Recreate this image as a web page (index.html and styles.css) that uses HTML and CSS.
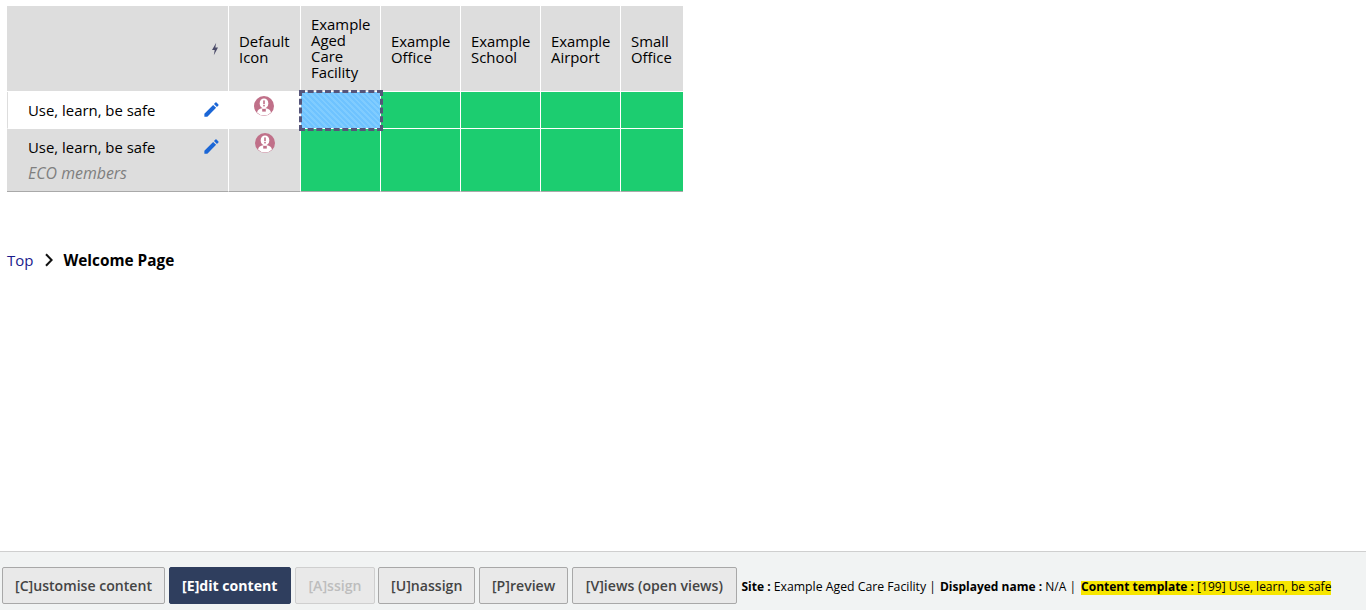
FILE: index.html
```html
<!DOCTYPE html>
<html lang="en">
<head>
<meta charset="utf-8">
<title>Welcome Page</title>
<link rel="stylesheet" href="styles.css">
</head>
<body>
<main class="content">
  <table class="matrix">
    <colgroup>
      <col class="c-name"><col class="c-icon"><col class="c-site"><col class="c-site2"><col class="c-site2"><col class="c-site2"><col class="c-last">
    </colgroup>
    <thead>
      <tr>
        <th class="bolt-cell"><svg class="bolt" viewBox="0 0 8 14" width="8" height="14"><path d="M5.2 .8 1 8h2.7L2.8 13.2 7 5.6H4.3z" fill="#4a4a68"/></svg></th>
        <th>Default<br>Icon</th>
        <th class="tall">Example<br>Aged<br>Care<br>Facility</th>
        <th>Example<br>Office</th>
        <th>Example<br>School</th>
        <th>Example<br>Airport</th>
        <th class="last">Small<br>Office</th>
      </tr>
    </thead>
    <tbody>
      <tr class="row-one">
        <td class="name active">
          <div class="name-line"><span>Use, learn, be safe</span>
            <svg class="pencil" viewBox="0 0 24 24" width="19" height="19"><path d="M3 17.25V21h3.75L17.81 9.94l-3.75-3.75L3 17.25zM20.71 7.04a1 1 0 0 0 0-1.41l-2.34-2.34a1 1 0 0 0-1.41 0l-1.83 1.83 3.75 3.75 1.83-1.83z" fill="#1b66d6"/></svg>
          </div>
        </td>
        <td class="icon-cell white">
          <svg class="person" viewBox="0 0 20 20" width="20" height="20"><use href="#person"/></svg>
        </td>
        <td class="selected"></td>
        <td class="green"></td><td class="green"></td><td class="green"></td><td class="green last"></td>
      </tr>
      <tr class="row-two">
        <td class="name">
          <div class="name-line"><span>Use, learn, be safe</span>
            <svg class="pencil" viewBox="0 0 24 24" width="19" height="19"><path d="M3 17.25V21h3.75L17.81 9.94l-3.75-3.75L3 17.25zM20.71 7.04a1 1 0 0 0 0-1.41l-2.34-2.34a1 1 0 0 0-1.41 0l-1.83 1.83 3.75 3.75 1.83-1.83z" fill="#1b66d6"/></svg>
          </div>
          <div class="group">ECO members</div>
        </td>
        <td class="icon-cell">
          <svg class="person" viewBox="0 0 20 20" width="20" height="20"><use href="#person"/></svg>
        </td>
        <td class="green"></td><td class="green"></td><td class="green"></td><td class="green"></td><td class="green last"></td>
      </tr>
    </tbody>
  </table>

  <nav class="crumbs">
    <a href="#">Top</a>
    <svg class="chev" viewBox="0 0 10 14" width="10" height="14"><path d="M2 1.2 7.6 7 2 12.8" fill="none" stroke="#111" stroke-width="2"/></svg>
    <strong>Welcome Page</strong>
  </nav>
</main>

<footer class="bar">
  <button class="btn">[C]ustomise content</button>
  <button class="btn primary">[E]dit content</button>
  <button class="btn disabled">[A]ssign</button>
  <button class="btn">[U]nassign</button>
  <button class="btn">[P]review</button>
  <button class="btn wide">[V]iews (open views)</button>
  <p class="status"><b>Site :</b> <span class="site-name">Example Aged Care Facility</span> <i class="sep">|</i> <b class="gap">Displayed name :</b> N/A <i class="sep">|</i> <mark><b>Content template :</b> [199] Use, learn, be safe</mark></p>
</footer>

<svg class="defs" width="0" height="0" aria-hidden="true">
  <symbol id="person" viewBox="0 0 20 20">
    <circle cx="10" cy="10" r="10" fill="#c07089"/>
    <path d="M3 16.4c.5-2.6 2.6-3.6 5-4.2h4c2.4.6 4.5 1.6 5 4.2A9.8 9.8 0 0 1 10 19.5a9.8 9.8 0 0 1-7-3.1z" fill="#fff"/>
    <ellipse cx="10" cy="7.4" rx="4.3" ry="5" fill="#fff"/>
    <rect x="9.2" y="4.4" width="1.6" height="3.8" fill="#c07089"/>
    <rect x="9.2" y="9" width="1.6" height="1.4" fill="#c07089"/>
    <rect x="8.2" y="13" width="3.6" height="2.6" fill="#c07089"/>
  </symbol>
</svg>
</body>
</html>
```
FILE: styles.css
```css
* { box-sizing: border-box; }
html, body { height: 100%; }
body {
  margin: 0;
  font-family: "Open Sans", "Noto Sans", sans-serif;
  color: #000;
  background: #fff;
  display: flex;
  flex-direction: column;
  overflow: hidden;
}
.content { flex: 1; padding: 6px 0 0 7px; min-height: 0; }
.matrix {
  table-layout: fixed;
  border-collapse: separate;
  border-spacing: 0;
  width: 676px;
  font-size: 14.9px;
}
.c-name { width: 222px; }
.c-icon { width: 72px; }
.c-site { width: 80px; }
.c-site2 { width: 80px; }
.c-last { width: 62px; }
.matrix th {
  height: 86px;
  background: #dddddd;
  border-right: 1px solid #fff;
  border-bottom: 1px solid #fff;
  font-weight: 400;
  line-height: 16px;
  text-align: left;
  vertical-align: middle;
  padding: 1px 0 0 10px;
}
.matrix th.tall { padding: 0 0 1px 10px; }
.matrix th.last, .matrix td.last { border-right: 0; }
.matrix th.bolt-cell { text-align: right; padding: 0 9px 0 0; }
.bolt { display: block; margin-left: auto; }
.matrix td {
  padding: 0;
  border-right: 1px solid #fff;
  border-bottom: 1px solid #fff;
  vertical-align: top;
}
.row-one td { height: 37px; }
.row-two td { height: 63px; border-bottom: 1px solid #a9a9a9; background: #dddddd; }
.matrix td.green { background: #1ccd70; }
.matrix td.name { padding: 0 0 0 21px; background: #dddddd; }
.row-one td.name.active { background: #fff; border-left: 1px solid #dddddd; padding-left: 20px; }
.name-line {
  display: flex;
  justify-content: space-between;
  align-items: center;
  height: 36px;
  padding-right: 7px;
}
.pencil { display: block; position: relative; top: -1px; }
.group { font-style: italic; font-size: 15.9px; color: #7f7f7f; line-height: 20px; margin-top: -2px; }
.matrix td.icon-cell { text-align: center; background: #dddddd; padding-top: 4px; }
.row-one .icon-cell.white { background: #fff; padding-right: 2px; }
.person { display: block; margin: 0 auto; }
.matrix td.selected {
  background: repeating-linear-gradient(45deg, #6fc3ff 0 2px, #80ccff 2px 4px);
  outline: 3px dashed #55557a;
  outline-offset: -1.5px;
}
.crumbs {
  display: flex;
  align-items: center;
  margin-top: 58px;
  font-size: 15px;
  line-height: 20px;
}
.crumbs a { color: #1a1a8c; text-decoration: none; }
.chev { margin: 0 9px 0 11px; }
.crumbs strong { font-weight: 700; font-size: 15.35px; }
.bar {
  flex: none;
  height: 59px;
  margin-bottom: 1px;
  background: #f1f3f3;
  border-top: 1px solid #cfcfcf;
  display: flex;
  align-items: center;
  gap: 3.6px;
  padding: 9px 0 0 2px;
}
.btn {
  height: 37px;
  padding: 0 12px;
  font: 600 14.1px "Open Sans", "Noto Sans", sans-serif;
  color: #444;
  background: #e9e9e9;
  border: 1px solid #a8a8a8;
  border-radius: 2px;
  white-space: nowrap;
}
.btn.primary { padding: 0 12.5px; margin-right: 1px; background: #2f3e5e; border-color: #2f3e5e; color: #fff; font-weight: 700; }
.btn.disabled { color: #bdbdbd; border-color: #cfcfcf; }
.btn.wide { padding: 0 13px; }
.status {
  margin: 1px 0 0 1px;
  font-size: 12px;
  white-space: nowrap;
  color: #000;
}
.status b { font-weight: 700; }
.site-name { font-size: 12.25px; }
.sep { font-style: normal; }
.gap { margin-left: 1px; }
mark {
  background: linear-gradient(transparent 3px, #f7e600 3px);
  color: inherit;
  margin-left: 2px;
}
.defs { position: absolute; }
```
